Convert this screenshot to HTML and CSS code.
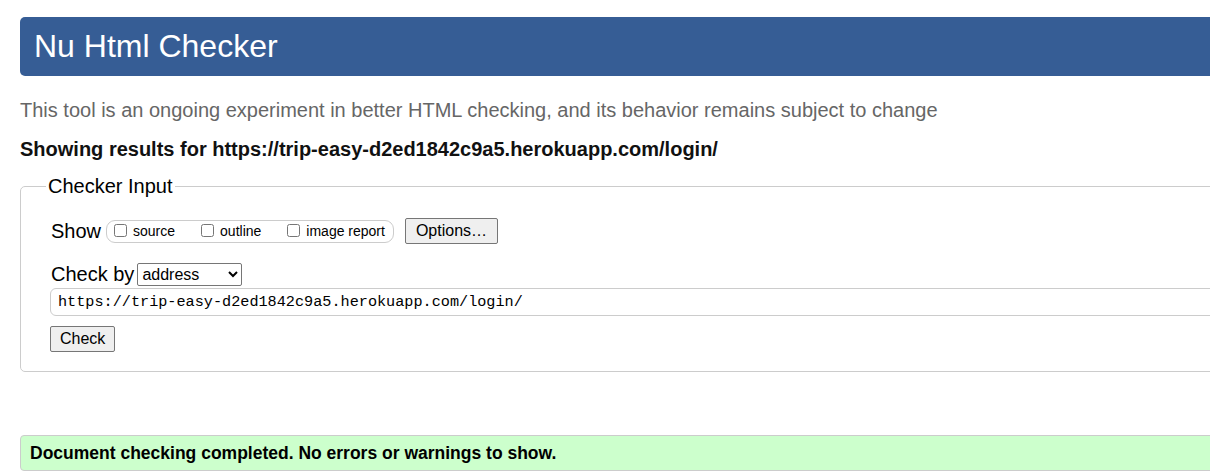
FILE: index.html
```html
<!DOCTYPE html>
<html>
<head>
    <meta charset="utf-8" />
    <title>Showing results for https://trip-easy-d2ed1842c9a5.herokuapp.com/login/ - Nu Html Checker</title>
    <link rel="stylesheet" href="styles.css">
</head>
<body>
    <div class="page">
        <h1 class="banner">Nu Html Checker</h1>
        <p class="tagline">This tool is an ongoing experiment in better HTML checking, and its behavior remains subject to change</p>
        <h2 class="results-for">Showing results for https://trip-easy-d2ed1842c9a5.herokuapp.com/login/</h2>

        <form class="checker-form">
            <fieldset class="checker-input">
                <legend>Checker Input</legend>
                <div class="row">
                    <span class="row-label">Show</span>
                    <span class="show-group">
                        <label class="show-option"><input type="checkbox" name="showsource"> source</label>
                        <label class="show-option"><input type="checkbox" name="showoutline"> outline</label>
                        <label class="show-option"><input type="checkbox" name="showimagereport"> image report</label>
                    </span>
                    <button type="button" class="btn options-btn">Options…</button>
                </div>
                <div class="row">
                    <label class="row-label" for="docselect">Check by</label>
                    <select id="docselect" class="doc-select">
                        <option>address</option>
                        <option>file upload</option>
                        <option>text input</option>
                    </select>
                </div>
                <input type="url" class="doc-url" name="doc" value="https://trip-easy-d2ed1842c9a5.herokuapp.com/login/">
                <div>
                    <button type="button" class="btn check-btn">Check</button>
                </div>
            </fieldset>
        </form>

        <p class="success">Document checking completed. No errors or warnings to show.</p>
    </div>
</body>
</html>
```

FILE: styles.css
```css
html {
    overflow: hidden;
}

body {
    margin: 0;
    font-family: "Liberation Sans", Arial, sans-serif;
    color: #000;
    background: #fff;
}

.page {
    width: 1300px;
    padding: 17px 0 0 20px;
}

.banner {
    margin: 0;
    height: 59px;
    padding-left: 14px;
    line-height: 59px;
    font-size: 32px;
    font-weight: normal;
    color: #fff;
    background: #365d95;
    border-radius: 5px;
}

.tagline {
    margin: 22px 0 0;
    font-size: 20px;
    line-height: 24px;
    color: #666;
}

.results-for {
    margin: 15px 0 0;
    font-size: 20px;
    line-height: 24px;
    font-weight: bold;
    color: #111;
}

.checker-form {
    margin-top: 13px;
}

.checker-input {
    margin: 0;
    padding: 20px 0 19px 30px;
    border: 1px solid #ccc;
    border-radius: 5px;
}

.checker-input legend {
    margin-left: -5px;
    padding: 0 2px;
    font-size: 20px;
    line-height: 24px;
}

.row {
    display: flex;
    align-items: center;
}

.row + .row {
    margin-top: 18px;
}

.row-label {
    font-size: 20px;
    line-height: 24px;
    margin-right: 3px;
}

.show-group {
    display: flex;
    align-items: center;
    height: 21px;
    margin-left: 2px;
    padding: 0 8px 0 3px;
    border: 1px solid #ccc;
    border-radius: 9px;
}

.show-option {
    display: flex;
    align-items: center;
    font-size: 14px;
    margin-right: 22px;
}

.show-option:last-child {
    margin-right: 0;
}

.show-option input {
    width: 13px;
    height: 13px;
    margin: 0 6px 2px 4px;
}

.btn {
    height: 26px;
    padding: 0 9px;
    font-family: "Liberation Sans", Arial, sans-serif;
    font-size: 16px;
    color: #000;
    background: #efefef;
    border: 1px solid #767676;
    border-radius: 2px;
}

.options-btn {
    margin-left: 11px;
    padding: 0 10px;
}

.doc-select {
    width: 105px;
    height: 23px;
    font-family: "Liberation Sans", Arial, sans-serif;
    font-size: 16px;
    color: #000;
    border: 1px solid #767676;
    border-radius: 2px;
    background: #fff;
}

.doc-url {
    display: block;
    box-sizing: border-box;
    width: 100%;
    height: 28px;
    margin: 2px 0 10px -1px;
    padding: 0 7px;
    font-family: "Liberation Mono", "DejaVu Sans Mono", monospace;
    font-size: 15.2px;
    color: #000;
    border: 1px solid #ccc;
    border-radius: 6px;
}

.check-btn {
    margin-left: -1px;
    padding: 0 9px;
}

.success {
    margin: 63px 0 0;
    height: 34px;
    padding-left: 9px;
    line-height: 34px;
    font-size: 17.5px;
    font-weight: bold;
    background: #ccffcc;
    border: 1px solid #ccc;
    border-radius: 4px;
}
```
